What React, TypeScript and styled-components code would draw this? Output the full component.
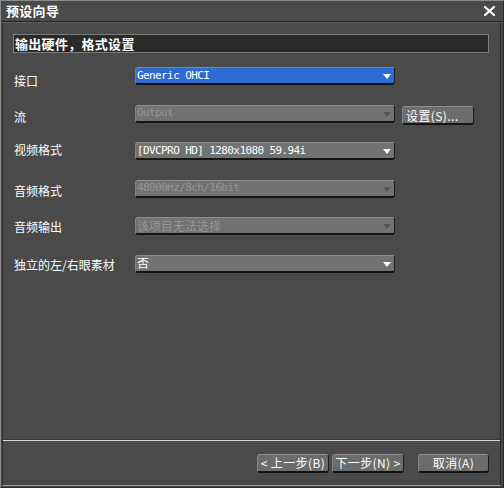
import styled, { createGlobalStyle } from 'styled-components';

const GlobalStyle = createGlobalStyle`
  html, body {
    margin: 0;
    padding: 0;
    background: #3a3a3a;
  }
  body {
    font-family: "Noto Sans CJK SC", "DejaVu Sans", sans-serif;
  }
`;

type Variant = 'active' | 'normal' | 'disabled';

const Window = styled.div`
  width: 504px;
  height: 488px;
  box-sizing: border-box;
  background: #4a4a4a;
  border-top: 1px solid #8c8c8c;
  border-left: 1px solid #8c8c8c;
  border-right: 1px solid #2a2a2a;
  border-bottom: 1px solid #2a2a2a;
  display: flex;
  flex-direction: column;
`;

const TitleBar = styled.div`
  height: 20px;
  display: flex;
  align-items: center;
  justify-content: space-between;
  padding: 0 8px 0 5px;
  border-bottom: 1px solid #262626;
  box-shadow: 0 1px 0 #5c5c5c;
`;

const Title = styled.span`
  color: #ffffff;
  font-size: 13px;
  font-weight: 700;
  line-height: 20px;
  letter-spacing: 0.3px;
`;

const Body = styled.div`
  flex: 1;
  margin: 1px 2px 1px 1px;
  border-left: 1px solid #2c2c2c;
  border-right: 1px solid #2c2c2c;
  border-bottom: 1px solid #9a9a9a;
  display: flex;
  flex-direction: column;
`;

const Content = styled.div`
  flex: 1;
  padding: 11px 11px 0 10px;
`;

const Header = styled.div`
  height: 19px;
  box-sizing: border-box;
  background: #2a2a2a;
  border: 1px solid #7c7c7c;
  color: #ffffff;
  font-size: 13px;
  font-weight: 700;
  line-height: 17px;
  letter-spacing: 0.3px;
  padding-left: 1px;
  margin-bottom: 14px;
`;

const Form = styled.div`
  display: grid;
  grid-template-columns: 121px 260px auto;
  grid-auto-rows: 18px;
  row-gap: 19.6px;
  align-items: center;
  padding-left: 1px;
`;

const Label = styled.span<{ $shift?: number }>`
  color: #ffffff;
  font-size: 12px;
  line-height: 18px;
  position: relative;
  top: ${({ $shift }) => $shift ?? 1}px;
`;

const Select = styled.div<{ $variant: Variant }>`
  height: 18px;
  box-sizing: border-box;
  border-radius: 3px;
  display: flex;
  align-items: center;
  justify-content: space-between;
  padding: 0 3px 1px 1px;
  font-family: "DejaVu Sans Mono", "Noto Sans CJK SC", monospace;
  background: ${({ $variant }) => ($variant === 'active' ? '#2d6bd2' : '#727272')};
  color: ${({ $variant }) => ($variant === 'disabled' ? '#959595' : '#ffffff')};
  border-top: 1px solid ${({ $variant }) => ($variant === 'active' ? '#5b8fe0' : '#8e8e8e')};
  border-left: 1px solid ${({ $variant }) => ($variant === 'active' ? '#4a80d8' : '#858585')};
  border-bottom: 2px solid #141414;
  border-right: 1px solid #1e1e1e;
`;

const SelectText = styled.span<{ $cjk?: boolean }>`
  font-size: ${({ $cjk }) => ($cjk ? '12px' : '11px')};
  letter-spacing: ${({ $cjk }) => ($cjk ? '0' : '-0.6px')};
  white-space: nowrap;
`;

const Arrow = styled.span<{ $variant: Variant }>`
  width: 0;
  height: 0;
  border-left: 4.5px solid transparent;
  border-right: 4.5px solid transparent;
  border-top: 5px solid ${({ $variant }) => ($variant === 'disabled' ? '#555555' : '#ffffff')};
  margin-top: 3px;
`;

const Button = styled.button<{ $width: number }>`
  width: ${({ $width }) => $width}px;
  height: 19px;
  box-sizing: border-box;
  border-radius: 3px;
  background: #6c6c6c;
  color: #ffffff;
  font-family: "Noto Sans CJK SC", "DejaVu Sans", sans-serif;
  font-size: 12px;
  line-height: 15px;
  letter-spacing: 0.4px;
  padding: 0;
  border-top: 1px solid #8e8e8e;
  border-left: 1px solid #858585;
  border-bottom: 2px solid #151515;
  border-right: 1px solid #1e1e1e;
  white-space: nowrap;
`;

const SideButton = styled(Button)`
  margin-left: 7px;
  margin-top: 1px;
  text-align: left;
  padding-left: 3px;
`;

const Footer = styled.div`
  height: 44px;
  border-top: 1px solid #d8d8d8;
  box-shadow: 0 -1px 0 #3a3a3a;
  display: flex;
  align-items: center;
  justify-content: flex-end;
  padding: 0 11px 0 0;
`;

const NavGroup = styled.div`
  display: flex;
  gap: 3px;
  margin-right: 14px;
`;

interface IRow {
  label: string;
  value: string;
  variant: Variant;
  cjk?: boolean;
  shift?: number;
  side?: string;
}

const rows: IRow[] = [
  { label: '接口', value: 'Generic OHCI', variant: 'active', shift: 5 },
  { label: '流', value: 'Output', variant: 'disabled', shift: 3, side: '设置(S)...' },
  { label: '视频格式', value: '[DVCPRO HD] 1280x1080 59.94i', variant: 'normal', shift: -1 },
  { label: '音频格式', value: '48000Hz/8ch/16bit', variant: 'disabled', shift: 2 },
  { label: '音频输出', value: '该项目无法选择', variant: 'disabled', cjk: true, shift: 1 },
  { label: '独立的左/右眼素材', value: '否', variant: 'normal', cjk: true, shift: 1 },
];

function CloseIcon(): JSX.Element {
  return (
    <svg width="11" height="10" viewBox="0 0 11 10">
      <path d="M1 1 L10 9 M10 1 L1 9" stroke="#ffffff" strokeWidth="2.2" strokeLinecap="square" />
    </svg>
  );
}

function App(): JSX.Element {
  return (
    <>
      <GlobalStyle />
      <Window>
        <TitleBar>
          <Title>预设向导</Title>
          <CloseIcon />
        </TitleBar>
        <Body>
          <Content>
            <Header>输出硬件，格式设置</Header>
            <Form>
              {rows.map((r) => (
                <>
                  <Label key={`${r.label}-l`} $shift={r.shift}>{r.label}</Label>
                  <Select key={`${r.label}-s`} $variant={r.variant}>
                    <SelectText $cjk={r.cjk}>{r.value}</SelectText>
                    <Arrow $variant={r.variant} />
                  </Select>
                  <div key={`${r.label}-b`}>
                    {r.side && <SideButton $width={72}>{r.side}</SideButton>}
                  </div>
                </>
              ))}
            </Form>
          </Content>
          <Footer>
            <NavGroup>
              <Button $width={72}>&lt; 上一步(B)</Button>
              <Button $width={72}>下一步(N) &gt;</Button>
            </NavGroup>
            <Button $width={71}>取消(A)</Button>
          </Footer>
        </Body>
      </Window>
    </>
  );
}

export default App;
